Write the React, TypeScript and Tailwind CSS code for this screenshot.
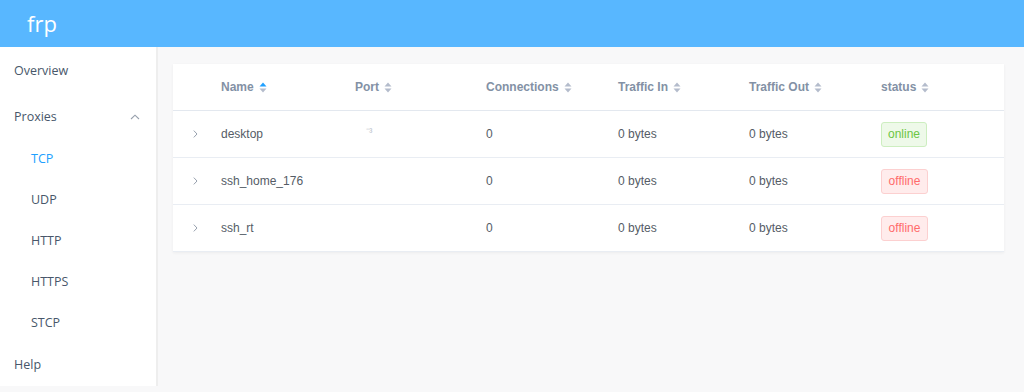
import React from "react";

const SortIcon = ({ active }: { active?: boolean }) => (
  <svg width="8" height="11" viewBox="0 0 8 11" className="ml-[5px] inline-block">
    <path d="M4 0.5 L7.5 4.5 L0.5 4.5 Z" fill={active ? "#20a0ff" : "#b4bccc"} />
    <path d="M4 10.5 L7.5 6.5 L0.5 6.5 Z" fill="#b4bccc" />
  </svg>
);

const Chevron = () => (
  <svg width="5" height="8" viewBox="0 0 5 8" className="block">
    <path d="M0.8 0.6 L4 4 L0.8 7.4" fill="none" stroke="#97a0ad" strokeWidth="1" />
  </svg>
);

const rows = [
  { name: "desktop", port: true, status: "online" },
  { name: "ssh_home_176", port: false, status: "offline" },
  { name: "ssh_rt", port: false, status: "offline" },
];

const cols = "grid grid-cols-[48px_134px_131px_132px_131px_132px_1fr]";

export default function App() {
  return (
    <div
      className="w-[1024px] h-[392px] bg-[#f8f8f9] overflow-hidden"
      style={{ fontFamily: '"Liberation Sans", Arial, sans-serif' }}
    >
      <header className="h-[47px] bg-[#58b7ff] flex items-center pl-[27px]">
        <span className="text-white text-[22px] leading-none -mt-[2px]" style={{ fontFamily: '"Open Sans", "Liberation Sans", sans-serif' }}>frp</span>
      </header>
      <div className="flex">
        <aside className="w-[158px] h-[339px] pt-[1px] bg-white border-r-2 border-[#eeeeee] text-[12.5px] text-[#48576a]" style={{ fontFamily: '"Open Sans", "Liberation Sans", sans-serif' }}>
          <div className="h-[47px] flex items-center pl-[14px]">Overview</div>
          <div className="h-[44px] flex items-center pl-[14px] pr-[16px] justify-between">
            <span>Proxies</span>
            <svg width="10" height="6" viewBox="0 0 10 6">
              <path d="M1 5 L5 1.2 L9 5" fill="none" stroke="#97a0ad" strokeWidth="1.1" />
            </svg>
          </div>
          {["TCP", "UDP", "HTTP", "HTTPS", "STCP"].map((t, i) => (
            <div key={t} className={`h-[41px] flex items-center pl-[31px] ${i === 0 ? "text-[#20a0ff]" : ""}`}>
              {t}
            </div>
          ))}
          <div className="h-[42px] flex items-center pl-[14px]">Help</div>
        </aside>
        <main className="flex-1 pt-[17px] pl-[15px] pr-[20px]">
          <div className="bg-white shadow-[0_1px_3px_rgba(0,0,0,0.05)] text-[12px]">
            <div className={`${cols} h-[47px] items-center border-b border-[#e3e8ef] font-bold text-[#8391a5]`}>
              <div />
              <div className="flex items-center">Name<SortIcon active /></div>
              <div className="flex items-center">Port<SortIcon /></div>
              <div className="flex items-center">Connections<SortIcon /></div>
              <div className="flex items-center">Traffic In<SortIcon /></div>
              <div className="flex items-center">Traffic Out<SortIcon /></div>
              <div className="flex items-center">status<SortIcon /></div>
            </div>
            {rows.map((r) => (
              <div key={r.name} className={`${cols} h-[47px] items-center border-b border-[#e9edf3] text-[#555c66]`}>
                <div className="flex justify-start pl-[20px]"><Chevron /></div>
                <div>{r.name}</div>
                <div className="pl-[11px] text-[10px] text-[#b8bec8] -mt-[6px]">{r.port ? "⁻³" : ""}</div>
                <div>0</div>
                <div>0 bytes</div>
                <div>0 bytes</div>
                <div>
                  {r.status === "online" ? (
                    <span className="inline-flex items-center h-[25px] w-[46px] justify-center rounded-[3px] border border-[#cdeec0] bg-[#eef9e9] text-[#6cc644] text-[12px]">
                      online
                    </span>
                  ) : (
                    <span className="inline-flex items-center h-[25px] w-[47px] justify-center rounded-[3px] border border-[#fcd0d0] bg-[#ffecec] text-[#ff6b6b] text-[12px]">
                      offline
                    </span>
                  )}
                </div>
              </div>
            ))}
          </div>
        </main>
      </div>
    </div>
  );
}
